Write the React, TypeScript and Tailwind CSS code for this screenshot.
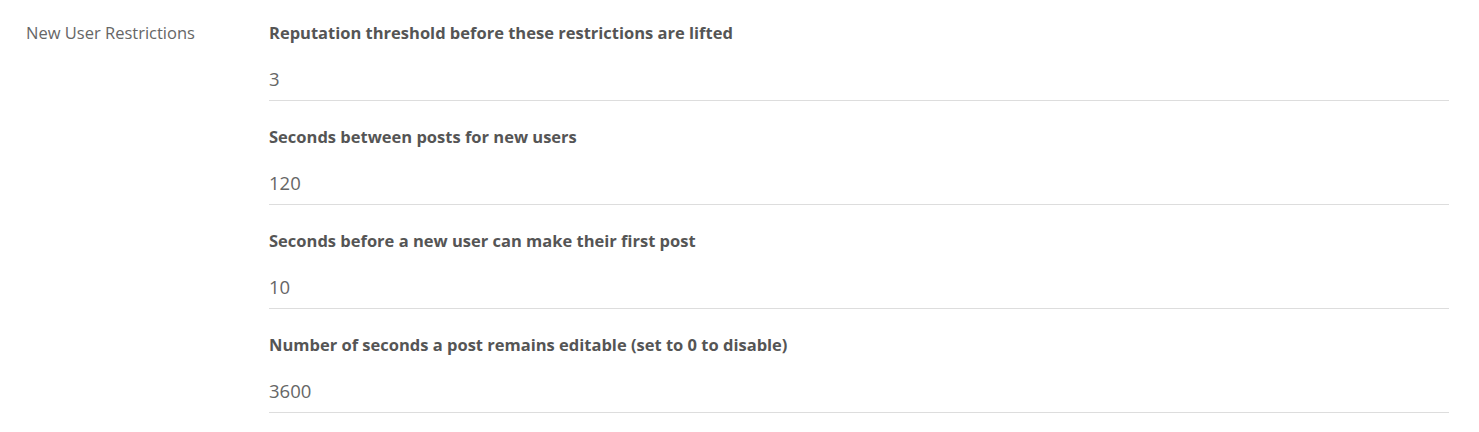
import React from "react";

const fields = [
  { label: "Reputation threshold before these restrictions are lifted", value: "3" },
  { label: "Seconds between posts for new users", value: "120" },
  { label: "Seconds before a new user can make their first post", value: "10" },
  { label: "Number of seconds a post remains editable (set to 0 to disable)", value: "3600" },
];

export default function App() {
  return (
    <div
      className="w-[1479px] h-[432px] bg-white flex"
      style={{ fontFamily: '"Open Sans", "Noto Sans", sans-serif' }}
    >
      <div className="w-[269px] shrink-0 pl-[26px] pt-[22px]">
        <div className="text-[16.5px] leading-[22px] text-[#666]">New User Restrictions</div>
      </div>
      <div className="w-[1180px] pt-[22px]">
        {fields.map((f) => (
          <div key={f.label} className="mb-[25px]">
            <div className="text-[16.5px] leading-[22px] font-bold text-[#555]">{f.label}</div>
            <div className="mt-[17px] h-[40px] pb-[3px] flex items-center border-b border-[#ddd] text-[18.5px] text-[#666]">
              {f.value}
            </div>
          </div>
        ))}
      </div>
    </div>
  );
}
